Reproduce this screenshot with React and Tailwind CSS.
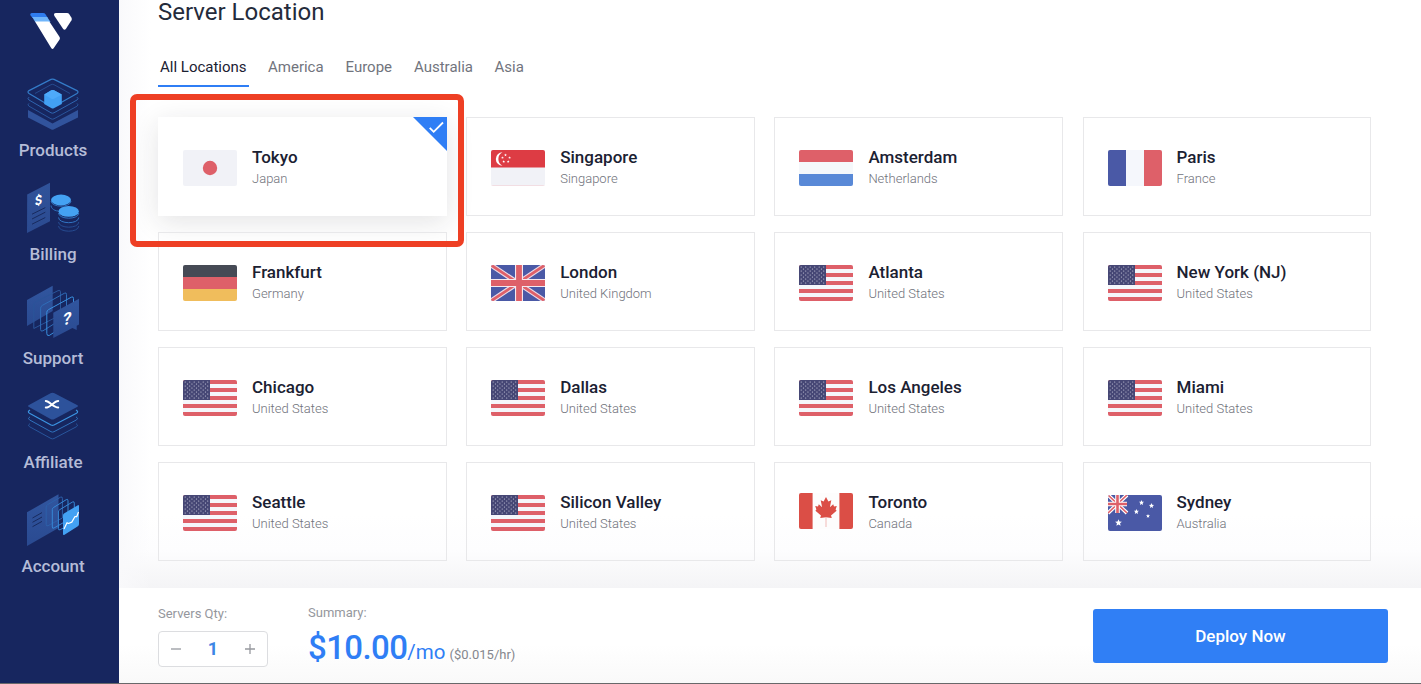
import React from 'react';

const ProductsIcon = () => (
  <svg className="h-14 w-14" viewBox="0 0 56 56" fill="none" strokeLinejoin="round">
    <path d="M3 34 27.500 47.500 53 34V41.500L28.600 53.500Q27.500 54 26.400 53.500L3 41.500Z" fill="#31539c" />
    <path d="M4 27.4Q2 28.8 4 30.2L26 42.8Q27.5 43.6 29 42.8L52 30.2Q54 28.8 52 27.4" stroke="#29549b" />
    <path d="M4 21.2Q2 22.6 4 24L26 36.8Q27.5 37.6 29 36.8L52 24Q54 22.6 52 21.2" stroke="#2f65b0" />
    <path d="M10 17.5 26 8.7Q27.5 8 29 8.7L45 17.5" stroke="#29549b" strokeWidth=".8" />
    <path d="M4 14.6Q2 16 4 17.4L26 30.4Q27.5 31.2 29 30.4L52 17.4Q54 16 52 14.6L29 3.4Q27.5 2.7 26 3.4Z" stroke="#347cc9" strokeWidth="1.200" />
    <path d="M19.2 18.4 26.3 14.3Q27.7 13.5 29 14.3L36.8 18.4V28L28.8 32.3Q27.7 32.8 26.6 32.3L19.2 28Z" fill="#42a0f4" />
    <path d="M19.2 18.4 26.3 14.3Q27.7 13.5 29 14.3L36.8 18.4 29 22.7Q27.7 23.3 26.4 22.7Z" fill="#4eaafa" />
  </svg>
);

const BillingIcon = () => (
  <svg className="h-14 w-14" viewBox="0 0 56 56" fill="none">
    <defs>
      <linearGradient id="bill" x1="0" y1="0" x2="0" y2="1">
        <stop stopColor="#30539a" />
        <stop offset="1" stopColor="#2b4a90" />
      </linearGradient>
    </defs>
    <path d="M2.2 14.5 25 2.8V41.2L2 53Z" fill="url(#bill)" />
    <text x="0" y="0" transform="matrix(1 -.35 0 1 9.8 26)" className="font-['Roboto'] text-[13px] font-bold" fill="#fff">$</text>
    <path d="m7 34.2 13.3-6.6M7 39 20.300 32.200M7 44.2 20.300 37.500" stroke="#182a5e" />
    <path d="M26 21c.3 6.800 19.700 7 20 0M26 25.500c.4 5 7 6 10 5.500" stroke="#2f6db9" />
    <ellipse cx="36" cy="20" rx="10" ry="5.400" fill="#44a2f3" />
    <path d="M33.500 33c.3 6.800 20 7 20.300 0M33.500 37.500c.3 6.800 20 7 20.300 0" stroke="#3174c3" />
    <path d="M33.500 42c.3 6.800 20 7 20.300 0M33.500 46c.3 6.800 20 7 20.300 0" stroke="#264b91" />
    <ellipse cx="43.700" cy="31.400" rx="10.200" ry="5.400" fill="#44a2f3" />
  </svg>
);

const SupportIcon = () => (
  <svg className="h-14 w-14" viewBox="0 4 56 56" fill="none" strokeLinejoin="round">
    <defs>
      <linearGradient id="sup" x1="0" y1="0" x2="0" y2="1">
        <stop stopColor="#31569f" />
        <stop offset="1" stopColor="#2a4a91" />
      </linearGradient>
    </defs>
    <path d="M2 20 27.700 5.800V31L2 46Z" fill="url(#sup)" />
    <path d="M10.500 22 33 10.700Q35.500 9.400 35.500 12V35L8.800 48.500V25Q8.800 23 10.500 22Z" stroke="#2a5499" />
    <path d="M17.300 25.400 39.300 13.300Q41.500 12 41.500 14.500V36L18 50.800Q15.600 52 15.600 49.500V28.300Q15.600 26.400 17.300 25.400Z" stroke="#2f6db9" />
    <path d="M23.400 29.700 46.300 17.200Q48.500 16 48.500 18.500V40L24.200 55.500Q21.800 56 21.800 53.500V32.500Q21.800 30.600 23.400 29.700Z" stroke="#3990e0" />
    <path d="M28.300 32.700 54 18.700V44.500L51.700 45.700V50L47.400 48 28.300 58Z" fill="url(#sup)" />
    <text x="0" y="0" transform="matrix(1 -.3 -.1 1 37.600 45.800)" className="font-['Roboto'] text-[17px] font-bold" fill="#fff">?</text>
  </svg>
);

const AffiliateIcon = () => (
  <svg className="h-14 w-14" viewBox="0 0 56 56" fill="none" strokeLinejoin="round">
    <path d="M5 35.600Q2 37.200 4.500 38.700L26 50.500Q27.500 51.300 29 50.500L51.500 38.700Q54 37.200 51 35.600" stroke="#28559c" />
    <path d="M5 28.800Q2 30.400 4.500 31.900L26 43.700Q27.500 44.500 29 43.700L51.500 31.900Q54 30.400 51 28.800" stroke="#3072bd" />
    <path d="M5 22Q2 23.700 4.500 25.200L26 37Q27.500 37.800 29 37L51.500 25.200Q54 23.700 51 22" stroke="#3b94e2" strokeWidth="1.200" />
    <path d="M4 17Q2 18 4 19L25.500 31Q27.500 32 29.500 31L52 19Q54 18 52 17L29.500 5.200Q27.500 4.200 25.500 5.200Z" fill="#2d529b" />
    <path d="M20.800 13C24.500 13.200 28.500 19.600 33.200 19.600M20.800 19.600C25.500 19.600 29 13 33.200 13" stroke="#fff" strokeWidth="2" strokeLinecap="round" />
  </svg>
);

const AccountIcon = () => (
  <svg className="h-14 w-14" viewBox="0 0 56 56" fill="none" strokeLinejoin="round">
    <defs>
      <linearGradient id="acc" x1="0" y1="0" x2="0" y2="1">
        <stop stopColor="#31569f" />
        <stop offset="1" stopColor="#2a4a91" />
      </linearGradient>
    </defs>
    <path d="M2 20.300 33.500 2.300V36L2 54Z" fill="url(#acc)" />
    <path d="m7.500 26 9.500-5.400M7.500 30.300 17 25M7.500 34.700 17 29.400" stroke="#182a5e" />
    <path d="M22.500 12.700 35.500 5.200Q37.400 4.200 37.400 6.500V26L23 33.700Q21.200 34.500 21.200 32.500V15Q21.200 13.500 22.500 12.700Z" stroke="#2d60aa" />
    <path d="M28.700 15.400 41.200 7.700Q43 6.500 43 8.800V28L29 36Q27.300 37 27.300 35V17.500Q27.300 16.200 28.700 15.400Z" stroke="#3687d6" />
    <path d="M34.700 17.700 47.500 10Q49.300 9 49.300 11.200V30L35.200 37.700Q33.400 38.600 33.400 36.500V19.900Q33.400 18.500 34.700 17.700Z" stroke="#3687d6" />
    <path d="M39 21.500 52.500 13.400Q54 12.500 54 14.300V32.300Q54 33.700 52.500 34.600L39.500 42.700Q38 43.500 38 42V23.500Q38 22.100 39 21.500Z" fill="#43a1f3" />
    <path d="m39 37 3-6.300 1.500.8 3.300-1.400 3.200-5.600 1.700.2L53.500 20" stroke="#fff" strokeWidth="1.200" />
  </svg>
);

const nav = [
  ['Products', ProductsIcon],
  ['Billing', BillingIcon],
  ['Support', SupportIcon],
  ['Affiliate', AffiliateIcon],
  ['Account', AccountIcon],
];

const starPoints = (cx, cy, r, n = 5) =>
  Array.from({ length: n * 2 }, (_, i) => {
    const rad = i % 2 ? r * 0.45 : r;
    const a = (Math.PI * i) / n - Math.PI / 2;
    return `${(cx + rad * Math.cos(a)).toFixed(2)},${(cy + rad * Math.sin(a)).toFixed(2)}`;
  }).join(' ');

const Star = ({ x, y, r }) => <polygon points={starPoints(x, y, r)} fill="#fff" />;

const UsFlag = () => (
  <>
    <rect width="54" height="36" fill="#f5f6fb" />
    {[0, 8, 16, 24, 32].map((y) => <rect key={y} y={y} width="54" height="4" fill="#de6069" />)}
    <rect width="27" height="20" fill="#464775" />
    {Array.from({ length: 9 }, (_, r) =>
      Array.from({ length: r % 2 ? 5 : 6 }, (_, c) => (
        <circle key={`${r}-${c}`} cx={2.2 + c * 4.5 + (r % 2 ? 2.25 : 0)} cy={2 + r * 2} r=".6" fill="#cfcfe0" />
      )))}
  </>
);

const flags = {
  Japan: (
    <>
      <rect width="54" height="36" fill="#f1f2f7" />
      <circle cx="27" cy="18" r="7.200" fill="#de6069" />
    </>
  ),
  Singapore: (
    <>
      <rect width="54" height="36" fill="#f1f2f7" />
      <rect width="54" height="17.500" fill="#dd3c44" />
      <path d="M11.500 2.300a6.600 6.600 0 1 0 0 13.400 7.500 7.500 0 0 1 0-13.400Z" fill="#fff" />
      <Star x={14.500} y={5} r={1.400} />
      <Star x={11.500} y={7.700} r={1.400} />
      <Star x={18.600} y={7.700} r={1.400} />
      <Star x={12.700} y={11.600} r={1.400} />
      <Star x={17.200} y={11.600} r={1.400} />
      <path d="M0 35.600H54" stroke="#f2d3d8" strokeWidth=".7" />
    </>
  ),
  Netherlands: (
    <>
      <rect width="54" height="36" fill="#f5f8fb" />
      <rect width="54" height="12" fill="#de6069" />
      <rect y="24" width="54" height="12" fill="#5989d7" />
    </>
  ),
  France: (
    <>
      <rect width="54" height="36" fill="#f5f7fc" />
      <rect width="18" height="36" fill="#4a59a6" />
      <rect x="36" width="18" height="36" fill="#de6069" />
    </>
  ),
  Germany: (
    <>
      <rect width="54" height="12" fill="#464a55" />
      <rect y="12" width="54" height="12" fill="#de6069" />
      <rect y="24" width="54" height="12" fill="#f0bd5c" />
    </>
  ),
  'United Kingdom': (
    <>
      <rect width="54" height="36" fill="#4a59a6" />
      <path d="M0 0 54 36M54 0 0 36" stroke="#eddbe6" strokeWidth="5" />
      <path d="M0 0 54 36M54 0 0 36" stroke="#de6069" strokeWidth="2.800" />
      <path d="M28 0V36M0 18H54" stroke="#f5e9ef" strokeWidth="8" />
      <path d="M28 0V36M0 18H54" stroke="#de6069" strokeWidth="5.800" />
    </>
  ),
  'United States': <UsFlag />,
  Canada: (
    <>
      <rect width="54" height="36" fill="#fdfdfd" />
      <rect width="13.600" height="36" fill="#db4e46" />
      <rect x="40.400" width="13.600" height="36" fill="#db4e46" />
      <path d="m27 4-2.400 4.600-2.900-1.400 1.400 7-3.300-3-.8 2.200-2.800-.5 1.200 3.700-1 1.200 5.600 4.600-.8 2.600 5.800-.8h0l5.800.8-.8-2.600 5.600-4.600-1-1.200 1.200-3.700-2.800.5-.8-2.200-3.300 3 1.400-7-2.900 1.400Z" fill="#db4e46" />
      <path d="M27 24v10" stroke="#edaaa6" strokeWidth=".8" />
    </>
  ),
  Australia: (
    <>
      <rect width="54" height="36" fill="#4a59a6" />
      <path d="M0 0 19 18M19 0 0 18" stroke="#fff" strokeWidth="3.800" />
      <path d="M0 0 19 18M19 0 0 18" stroke="#de6069" strokeWidth="1.600" />
      <path d="M9.500 0V18M0 9H19" stroke="#fff" strokeWidth="4.600" />
      <path d="M9.500 0V18M0 9H19" stroke="#de6069" strokeWidth="2.600" />
      <Star x={10.500} y={27.800} r={3.600} />
      <Star x={33.500} y={7.700} r={2.700} />
      <Star x={43.500} y={10.800} r={2.700} />
      <Star x={28.400} y={16.700} r={2.700} />
      <Star x={40} y={21} r={2.100} />
    </>
  ),
};

const locations = [
  ['Tokyo', 'Japan'], ['Singapore', 'Singapore'], ['Amsterdam', 'Netherlands'], ['Paris', 'France'],
  ['Frankfurt', 'Germany'], ['London', 'United Kingdom'], ['Atlanta', 'United States'], ['New York (NJ)', 'United States'],
  ['Chicago', 'United States'], ['Dallas', 'United States'], ['Los Angeles', 'United States'], ['Miami', 'United States'],
  ['Seattle', 'United States'], ['Silicon Valley', 'United States'], ['Toronto', 'Canada'], ['Sydney', 'Australia'],
];

function LocationCard({ city, country, selected }) {
  return (
    <div
      className={
        selected
          ? 'relative flex h-[99px] items-start bg-white pl-[25px] pt-[28px] shadow-[0_6px_26px_rgba(30,30,40,0.12)]'
          : 'relative flex h-[99px] items-start border border-[#e8e8ea] pl-[24px] pt-[27px]'
      }
    >
      <svg
        className={country === 'Canada' ? 'mt-[3px] h-9 w-[54px] shrink-0 rounded-[2px]' : 'mt-[5px] h-9 w-[54px] shrink-0 rounded-[2px]'}
        viewBox="0 0 54 36"
      >
        {flags[country]}
      </svg>
      <div className="ml-[15px] whitespace-nowrap">
        <div className="text-[17px] font-medium leading-6 text-[#1b2132]">{city}</div>
        <div className="text-[13px] font-light leading-[19px] text-[#70727b]">{country}</div>
      </div>
      {selected && (
        <svg className="absolute right-0 top-0 h-[34px] w-[34px]" viewBox="0 0 34 34" fill="none">
          <path d="M0 0H34V34Z" fill="#2f7ef5" />
          <path d="m16.700 10.800 4 4 9.300-9.300" stroke="#fff" strokeWidth="1.800" />
        </svg>
      )}
    </div>
  );
}

export default function App() {
  return (
    <div className="relative flex h-[684px] w-[1421px] flex-col overflow-hidden bg-white font-['Roboto',sans-serif]">
      <div className="flex h-[683px]">
        <aside className="flex w-[119px] shrink-0 flex-col items-center bg-[#17265f] pr-[13px]">
          <div className="h-[76px] pr-[4px] pt-3">
            <svg className="h-[38px] w-[43px]" viewBox="0 0 43 38">
              <path d="M2.500 1H13Q14.700 1 15.500 2.300L17.800 6H2.600L.4 3.300Q-.3 1 2.500 1Z" fill="#2f7df0" />
              <path d="M2.200 5H17.200L20.500 10H5.200Z" fill="#70b6fb" />
              <path d="M5 9.500H18.500Q19.500 9.500 20 10.400L29.600 25Q30.300 26.200 29.600 27.400L23.800 36Q22.500 37.800 21.200 36Z" fill="#fff" />
              <path d="M26 1H37Q38.500 1 39.300 2.200L41.500 5.800Q42.200 7 41.500 8.200L36 16.700Q34.500 18.700 33 16.700L24.300 3.700Q23.200 1 26 1Z" fill="#fff" />
            </svg>
          </div>
          {nav.map(([label, Icon]) => (
            <div key={label} className="flex h-[104px] flex-col items-center">
              <Icon />
              <div className="mt-[6px] text-[17px] font-medium leading-6 text-[#b5bcd7]">{label}</div>
            </div>
          ))}
        </aside>

        <div className="flex min-w-0 flex-1 flex-col">
          <main className="h-[588px] bg-[linear-gradient(to_right,#f9f9fb,transparent_32px),linear-gradient(to_top,#f4f4f6,#fdfdfe_38px,#ffffff_75px)] pl-[39px]">
            <h1 className="h-[54px] text-2xl leading-6 text-[#242b3b]">Server Location</h1>
            <nav className="flex h-[63px] items-start text-[15px] leading-[27px] text-[#71747d]">
              <div className="h-[33px] w-[91px] border-b-2 border-[#2f7ef5] pl-[2px] text-[#1b2132]">All Locations</div>
              <div className="ml-[19px] w-[77.500px]">America</div>
              <div className="w-[68.500px]">Europe</div>
              <div className="w-[80.500px]">Australia</div>
              <div>Asia</div>
            </nav>
            <div className="grid grid-cols-[repeat(4,288.7px)] gap-x-[19.5px] gap-y-4">
              {locations.map(([city, country], i) => (
                <LocationCard key={city} city={city} country={country} selected={i === 0} />
              ))}
            </div>
          </main>

          <footer className="flex flex-1 items-start bg-[linear-gradient(#ffffff_60%,#f9f9f9)] pl-[39px] pr-[33px]">
            <div className="w-[150px] pt-4">
              <div className="text-[13px] leading-5 text-[#95979d]">Servers Qty:</div>
              <div className="mt-[7px] flex h-9 w-[110px] items-center justify-between rounded-[4px] border border-[#dcdde0] bg-white px-3">
                <svg className="h-[10px] w-[10px]" viewBox="0 0 10 10"><path d="M0 5H10" stroke="#97999f" strokeWidth="1.300" /></svg>
                <span className="text-lg font-bold leading-6 text-[#3d86e5]">1</span>
                <svg className="h-[10px] w-[10px]" viewBox="0 0 10 10"><path d="M0 5H10M5 0V10" stroke="#97999f" strokeWidth="1.300" /></svg>
              </div>
            </div>
            <div className="pt-[15px]">
              <div className="text-[13px] leading-5 text-[#95979d]">Summary:</div>
              <div className="mt-[5px] flex items-baseline whitespace-nowrap text-[#2f7ef5]">
                <span className="text-[33px] font-medium leading-[40px] tracking-[-0.6px]">$10.00</span>
                <span className="text-[20.500px]">/mo</span>
                <span className="ml-[4px] text-[13px] text-[#85878d]">($0.015/hr)</span>
              </div>
            </div>
            <button className="ml-auto mt-[21px] h-[54px] w-[295px] rounded-[3px] bg-[#307ff5] pt-px text-[17px] font-medium text-white">Deploy Now</button>
          </footer>
        </div>
      </div>
      <div className="h-px bg-[#68686a]" />
      <div className="pointer-events-none absolute left-[130px] top-[94px] h-[153px] w-[334px] rounded-[7px] border-[6.500px] border-[#ee3f24]" />
    </div>
  );
}
